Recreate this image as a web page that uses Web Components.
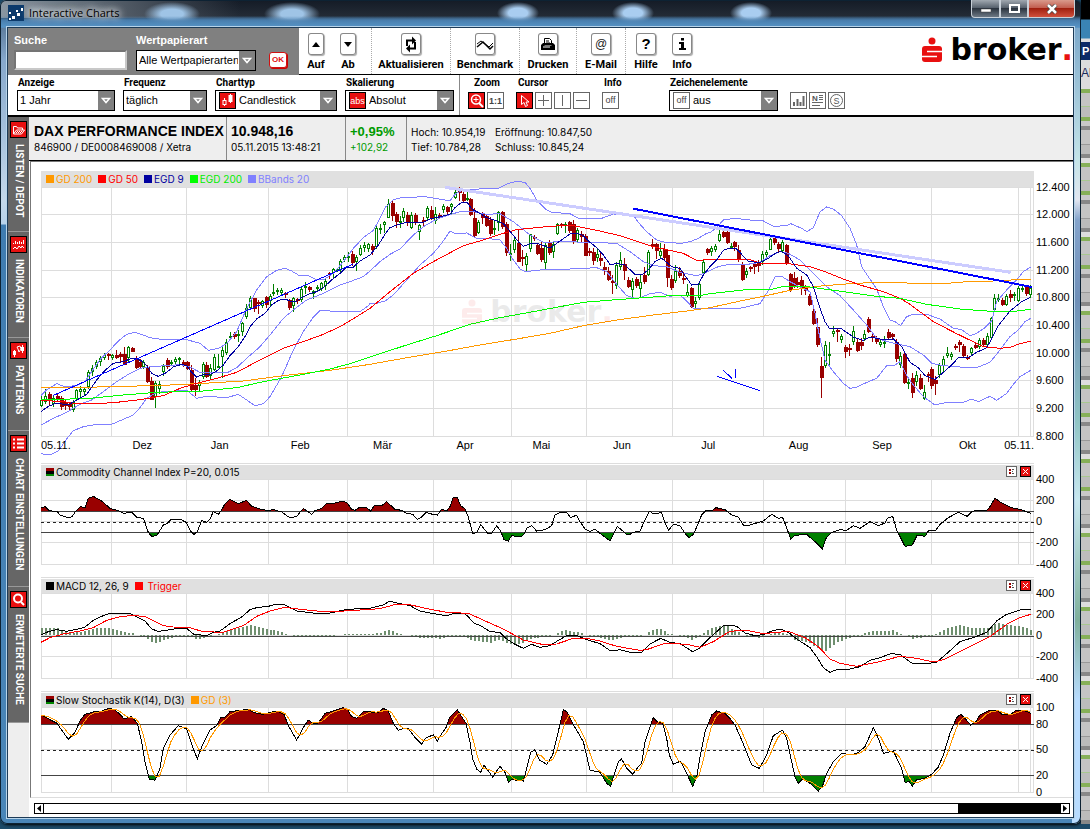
<!DOCTYPE html>
<html lang="de">
<head>
<meta charset="utf-8">
<title>Interactive Charts</title>
<style>
html{background:#1c4a68}
body{margin:0;font-family:"Liberation Sans",Arial,sans-serif;font-size:11px;line-height:12px;color:#000}
</style>
</head>
<body>
<charts-desktop>
  <charts-window heading="Interactive Charts">
    <search-bar slot="top"></search-bar>
    <main-toolbar slot="top"></main-toolbar>
    <view-toolbar slot="view"></view-toolbar>
    <side-tabs slot="side"></side-tabs>
    <quote-bar slot="main"></quote-bar>
    <chart-stack slot="main"></chart-stack>
    <range-scroller slot="main"></range-scroller>
  </charts-window>
</charts-desktop>

<script>
const component = (name, markup, css, extra) => {
  customElements.define(name, class extends HTMLElement {
    connectedCallback() {
      if (this.shadowRoot) return;
      const root = this.attachShadow({ mode: 'open' });
      const t = document.createElement('template');
      t.innerHTML = `<style>:host,*{box-sizing:border-box}${css}</style>` + (typeof markup === 'function' ? markup(this) : markup);
      root.append(t.content.cloneNode(true));
      if (extra) extra(this, root);
    }
  });
};

/* ---------- icons ---------- */
const svg = (w, h, body) => `<svg width="${w}" height="${h}" viewBox="0 0 ${w} ${h}" fill="none" aria-hidden="true" style="display:block">${body}</svg>`;
const grey = b => svg(17, 17, `<rect x=".5" y=".5" width="16" height="16" fill="#fff" stroke="#666"/>` + b);
const red = b => svg(17, 17, `<rect x=".5" y=".5" width="16" height="16" fill="#e81010" stroke="#000"/>` + b);
const smallText = (t, x, y, c, s, w) => `<text x="${x}" y="${y}" fill="${c}" font-family="Liberation Sans,Arial,sans-serif" font-size="${s}" font-weight="${w || 400}" text-anchor="middle">${t}</text>`;
const ICONS = {
  up: svg(16, 22, `<path d="M8 9l4 5H4z" fill="#000"/>`),
  down: svg(16, 22, `<path d="M8 14l4-5H4z" fill="#000"/>`),
  refresh: svg(20, 22, `<path d="M6 13V7.500h7M14 9v6.500H7" stroke="#000" stroke-width="2"/><path d="M11 3.500l4 4-4 4z" fill="#000"/><path d="M9 11.500l-4 4 4 4z" fill="#000"/>`),
  bench: svg(20, 22, `<path d="M2 14l6-5 7 7 3-3" stroke="#000" stroke-width="1.5"/><path d="M2 11l4-3 8 6 4-4" stroke="#000"/>`),
  print: svg(20, 22, `<path d="M6.5 11V5.500h5l2 2V11" fill="#fff" stroke="#000"/><path d="M8 8h3M8 10h4" stroke="#000"/><path d="M3 12l2-2h10l2 2v5H3z" fill="#000"/><path d="M5 14h7" stroke="#fff"/><path d="M6.500 12.500h7" stroke="#777"/>`),
  mail: svg(20, 22, smallText('@', 10, 15, '#222', 12)),
  help: svg(20, 22, smallText('?', 10, 16, '#000', 15, 700)),
  info: svg(20, 22, `<path d="M9 5h3v2.500H9zM7 9h5v6h2v2H7v-2h2v-4H7z" fill="#000"/>`),
  candle: red(`<path d="M5.500 6v8M11.500 2v9" stroke="#fff"/><rect x="4" y="8.500" width="3" height="4" fill="#e81010" stroke="#fff"/><rect x="9.500" y="3" width="4" height="7" fill="#fff"/>`),
  abs: red(smallText('abs', 8.5, 12, '#fff', 9)),
  zoom: red(`<circle cx="8" cy="7.500" r="4.500" stroke="#fff" stroke-width="1.500"/><path d="M11 11l4 4" stroke="#fff" stroke-width="2"/><path d="M5.500 7.500h5M8 5v5" stroke="#fff"/>`),
  one: grey(smallText('1:1', 8.5, 12, '#444', 9, 700)),
  arrow: red(`<path d="M5.500 3.500v9l2.500-2 1.500 4 2-1-1.500-3.500h3z" stroke="#fff"/>`),
  cross: grey(`<path d="M8.500 3v11M3 8.500h11" stroke="#666"/>`),
  vline: grey(`<path d="M8.500 3v11" stroke="#666"/>`),
  hline: grey(`<path d="M3 8.500h11" stroke="#666"/>`),
  off: grey(smallText('off', 8.5, 11, '#444', 9)),
  bars: grey(`<path d="M4 14v-4M7.500 14V7M10.500 14v-4M13.500 14V4" stroke="#666" stroke-width="2"/>`),
  news: grey(smallText('N', 6, 9, '#555', 8, 700) + `<path d="M10 3.500h4M10 5.500h4M10 7.500h4M3 10.500h11M3 13.500h8" stroke="#666"/>`),
  circle: grey(`<circle cx="8.500" cy="8.500" r="6" stroke="#666"/>` + smallText('S', 8.5, 12, '#555', 9)),
  folder: red(`<path d="M3.500 13V5.500h3l1 1.500h5v2M3.500 13l3-4h8l-3 4z" stroke="#fff"/><path d="M6 12l2-2M8 12l2-2M10 12l2-2" stroke="#fff"/>`),
  indi: red(`<path d="M3.500 8V7M5.500 8V5M7.500 8V6M9.500 8V5M11.500 8V6M13.500 8V4" stroke="#fff"/><path d="M3 13l2-2 2 2 2-3 2 2 1-2 2 2" stroke="#fff"/>`),
  pattern: red(`<path d="M4.500 8v7M12.500 3v8M7 5l3-1 1 3-2 3-1-3z" stroke="#fff"/><rect x="3" y="9" width="3" height="4" fill="#fff"/><rect x="11" y="5" width="3" height="4" fill="#fff"/>`),
  settings: red(`<path d="M3 4.500h2M3 8.500h2M3 12.500h2M7 4.500h7M7 8.500h7M7 12.500h7" stroke="#fff" stroke-width="2"/>`),
  search: red(`<circle cx="8" cy="7.500" r="4" stroke="#fff" stroke-width="2"/><path d="M11 11l3 3" stroke="#fff" stroke-width="2"/>`)
};

/* ---------- controls ---------- */
component('tool-button', el => `<button type="button"><i>${ICONS[el.getAttribute('icon')]}</i><span>${el.getAttribute('label')}</span></button>`, `
:host{display:block}
button{display:flex;flex-direction:column;align-items:center;gap:4px;width:100%;border:0;background:none;padding:5px 0 0;font:700 11px/12px Roboto,sans-serif;color:#000;white-space:nowrap}
i{display:flex;justify-content:center;height:22px;border-radius:3px;background:#fff;box-shadow:inset 0 0 0 1px #888,1px 1px 1px #aaa;font-style:normal}`);

component('icon-button', el => `<button type="button" aria-label="${el.getAttribute('label')}">${ICONS[el.getAttribute('icon')]}</button>`, `
:host{display:block}
button{display:block;border:0;background:none;padding:0}`);

component('pick-list', el => {
  const icon = el.getAttribute('icon');
  return `<label for="s">${el.getAttribute('label')}</label>
  <div class="box"><select id="s" class="${icon ? 'wide' : ''}"><option>${el.getAttribute('value')}</option></select>
  ${icon ? `<span class="icon">${ICONS[icon]}</span>` : ''}
  <span class="arrow">${svg(16, 19, `<path d="M4.500 7.500h7l-3.500 4z" stroke="#fff" stroke-width="1.500"/>`)}</span></div>`;
}, `
:host{display:flex;flex-direction:column;gap:1px}
label{font:700 10px/12px Roboto,sans-serif;padding-left:1px;white-space:nowrap}
:host([search]){gap:4px}
:host([search]) label{font:700 11px/12px "Liberation Sans",Arial,sans-serif;color:#fff;padding:0}
.box{display:grid;height:21px}
.box>*{grid-area:1/1}
select{appearance:none;width:100%;height:21px;border:1px solid #000;border-radius:0;background:#fff;padding:0 17px 0 2px;font:11px/19px "Liberation Sans",Arial,sans-serif;color:#000}
select.wide{padding-left:23px}
.icon{place-self:center start;padding-left:4px;pointer-events:none}
.arrow{place-self:center end;margin-right:1px;background:#808080;pointer-events:none}`);

component('search-bar', `
<div class="f"><label for="q">Suche</label><input id="q" type="text"></div>
<pick-list search label="Wertpapierart" value="Alle Wertpapierarten"></pick-list>
<button type="button">OK</button>`, `
:host{display:grid;grid-template-columns:113px 120px auto;column-gap:9px;width:291px;height:47px;background:#808080;padding:6px 0 0 6px}
.f{display:flex;flex-direction:column;gap:4px}
label{color:#fff;font-weight:700}
input{height:20px;width:100%;border:2px inset #c8c8c8;background:#fff;padding:0 2px;font:11px "Liberation Sans",Arial,sans-serif}
button{place-self:start;margin:18px 0 0 4px;width:18px;height:16px;border:1px solid #d01010;border-radius:3px;background:#fff;color:#e01010;font:700 8px/14px "Liberation Sans",Arial,sans-serif;padding:0;box-shadow:1px 1px 0 #c00}`);

component('broker-logo', `<svg width="22" height="26" viewBox="0 0 22 26" aria-hidden="true"><circle cx="10" cy="4" r="3.500" fill="#e81010"/><rect y="9" width="20" height="16" rx="3" fill="#e81010"/><path d="M5 14.500h15M0 19.500h15" stroke="#fff" stroke-width="1.500"/></svg><span>broker<b>.</b></span>`, `
:host{display:flex;align-items:flex-end;gap:6px;height:26px}
span{font:700 30px/26px "DejaVu Sans",sans-serif;white-space:nowrap;height:26px}
b{color:#e81010}`);

component('main-toolbar', `
<div class="g pair"><tool-button icon="up" label="Auf"></tool-button><tool-button icon="down" label="Ab"></tool-button></div>
<div class="g"><tool-button icon="refresh" label="Aktualisieren"></tool-button></div>
<div class="g"><tool-button icon="bench" label="Benchmark"></tool-button></div>
<div class="g"><tool-button icon="print" label="Drucken"></tool-button></div>
<div class="g"><tool-button icon="mail" label="E-Mail"></tool-button></div>
<div class="g last"><tool-button icon="help" label="Hilfe"></tool-button><tool-button icon="info" label="Info"></tool-button></div>
<broker-logo></broker-logo>`, `
:host{display:grid;grid-template-columns:73px 79px 69px 57px 49px 76px 1fr;flex:1;height:47px;background:#fff;border-bottom:1px solid #000}
.g{border-right:1px dotted #aaa}
.pair{display:grid;grid-template-columns:32px 32px;padding-left:1px}
.last{display:grid;grid-template-columns:36px 36px;padding-left:2px;border:0}
broker-logo{place-self:start end;margin:9px 0 0}`);

component('view-toolbar', `
<div class="a"><pick-list label="Anzeige" value="1 Jahr"></pick-list><pick-list label="Frequenz" value="täglich"></pick-list>
<pick-list label="Charttyp" value="Candlestick" icon="candle"></pick-list><pick-list label="Skalierung" value="Absolut" icon="abs"></pick-list></div>
<div class="b">
<div class="f mid"><span>Zoom</span><div><icon-button icon="zoom" label="Vergrößern"></icon-button><icon-button icon="one" label="Originalgröße"></icon-button></div></div>
<div class="f"><span>Cursor</span><div><icon-button icon="arrow" label="Pfeil"></icon-button><icon-button icon="cross" label="Fadenkreuz"></icon-button><icon-button icon="vline" label="Vertikal"></icon-button><icon-button icon="hline" label="Horizontal"></icon-button></div></div>
<div class="f"><span>Info</span><div><icon-button icon="off" label="Info aus"></icon-button></div></div>
<pick-list label="Zeichenelemente" value="aus" icon="off"></pick-list>
<div class="f"><span></span><div><icon-button icon="bars" label="Volumen"></icon-button><icon-button icon="news" label="News"></icon-button><icon-button icon="circle" label="Splits"></icon-button></div></div>
</div>`, `
:host{display:flex;height:42px;background:#fff;border-bottom:2px solid #000;padding-left:9px}
.a{display:grid;grid-template-columns:98px 84px 122px 109px;gap:8px;padding:2px 5px 0 0;border-right:1px solid #888}
.b{display:grid;grid-template-columns:36px 74px 55px 109px auto;column-gap:12px;padding:2px 0 0 8px}
.f{display:grid;grid-template-rows:12px 21px;gap:1px;align-items:center}
.f>div{display:flex;gap:2px}
.mid{text-align:center}
.f span{font:700 10px/12px Roboto,sans-serif;padding-left:2px}`);

component('side-tab', el => `<button type="button"><span>${ICONS[el.getAttribute('icon')]}</span><b>${el.textContent}</b></button>`, `
:host{display:block;background:#666;border-bottom:1px solid #999}
button{display:flex;flex-direction:column;align-items:center;gap:6px;width:100%;border:0;background:none;padding:4px 0 12px;color:#fff}
b{writing-mode:vertical-rl;font:700 10px/12px Roboto,sans-serif;white-space:nowrap}`);

component('side-tabs', `
<side-tab icon="folder">LISTEN / DEPOT</side-tab><side-tab icon="indi">INDIKATOREN</side-tab><side-tab icon="pattern">PATTERNS</side-tab><side-tab icon="settings">CHART EINSTELLUNGEN</side-tab><side-tab icon="search">ERWETERTE SUCHE</side-tab>`, `
:host{display:grid;grid-template-rows:115px 106px 93px 156px 136px;align-content:start;width:21px;background:#eee}`);

component('quote-bar', `
<div class="n"><strong>DAX PERFORMANCE INDEX</strong><span>846900 / DE0008469008 / Xetra</span></div>
<div><strong>10.948,16</strong><span>05.11.2015 13:48:21</span></div>
<div class="up"><b>+0,95%</b><span>+102,92</span></div>
<dl><dt>Hoch: 10.954,19</dt><dd>Eröffnung: 10.847,50</dd><dt>Tief: 10.784,28</dt><dd>Schluss: 10.845,24</dd></dl>`, `
:host{display:grid;grid-template-columns:198px 119px 61px 1fr;height:44px;background:#eee;border-bottom:1px solid #000;font:10px/14px Inter,sans-serif}
:host>div{display:flex;flex-direction:column}
div{display:flex;flex-direction:column;padding:6px 0 0 4px;border-right:1px solid #888;white-space:nowrap}
.n{padding-left:5px}
strong{font:700 14px/17px "Liberation Sans",Arial,sans-serif}
b{font:700 13px/17px "Liberation Sans",Arial,sans-serif}
.up{color:#009a00}
dl{display:grid;grid-template-columns:84px auto;grid-auto-rows:15px;justify-content:start;margin:0;padding:8px 0 0 4px}
dt,dd{margin:0;white-space:nowrap}`);

/* ---------- chart data: three chart units per screen pixel ---------- */
const STEP = 11.82;
const join = parts => parts.flatMap(([dx, s]) => s.trim().split(/\s+/).map(p => { const [x, y] = p.split(',').map(Number); return [x + dx, y]; })).sort((a, b) => a[0] - b[0]);
const price = (a, b, c) => join([[-33, a], [987, b], [2007, c]]);
const indic = (a, b, c) => join([[-33, a], [1077, b], [2067, c]]);

const CANDLES = `u690,705,722,725 u672,694,712,718 d682,688,710,722 u690,698,716,726 d686,692,702,712 d692,698,726,734 d705,712,724,736 d712,716,724,734 u704,712,736,740 u672,676,702,706
u662,672,680,700 u668,672,680,690 u614,620,666,672 u600,610,622,632 u586,592,606,612 u572,580,592,602 u564,570,578,586 d564,567,569,584 u566,570,580,586 d556,570,578,582
d560,566,574,590 d546,566,598,600 u542,545,577,590 d546,549,560,562 d574,582,608,612 d582,592,606,610 u584,592,606,612 d600,606,650,654 d636,648,704,706 u648,654,696,728
u648,656,672,686 u598,604,622,632 d580,584,606,612 u584,592,598,604 u576,582,590,600 u576,580,584,600 d584,590,600,606 d588,590,612,616 d600,614,674,678 d640,660,674,694
u646,654,664,678 u590,598,636,642 d590,600,636,640 u596,608,632,642 u568,576,614,618 u568,602,606,610 u546,556,578,640 u522,530,564,570 u502,512,516,526 d502,506,514,522
u496,506,512,532 u470,474,500,514 u416,430,458,462 u394,398,428,436 d398,400,434,440 d406,412,418,448 u404,408,422,430 d394,397,420,430 u386,392,408,426 u358,380,386,394
u370,375,382,390 u368,376,384,390 d382,385,389,400 d402,405,430,436 u396,400,424,440 d398,402,408,418 u362,372,406,412 u352,362,366,388 d362,366,374,380 u374,378,388,402
u360,366,372,380 u350,354,372,378 u340,347,362,374 d320,324,330,342 u308,313,326,338 u308,313,316,322 u282,288,314,320 u270,276,286,292 u262,272,276,290 d258,268,296,302
u270,276,292,318 u240,248,268,274 u232,240,250,262 u234,236,252,260 d236,242,254,270 u184,190,248,252 u176,188,192,208 u168,172,180,204 u102,116,158,160 d108,114,152,168
d140,148,172,188 u152,168,172,190 u128,138,160,172 d142,150,172,182 u142,150,188,192 d144,150,172,180 u176,180,200,226 d156,166,172,182 u122,130,160,164 d124,134,160,164
u126,148,170,176 d144,150,154,160 u116,124,136,144 d122,126,142,148 u114,116,126,150 u74,80,98,102 d66,78,84,108 d78,86,108,112 u82,98,104,108 d100,102,150,152
d130,160,214,218 u166,172,204,208 d140,148,160,178 d146,152,182,186 d156,166,208,214 u166,188,192,210 u138,142,176,198 d138,142,188,192 d170,178,266,272 u238,264,268,288
u220,226,256,264 d196,234,290,292 d254,276,282,304 u264,272,300,322 u206,208,254,260 d210,216,222,228 d238,240,266,270 d232,248,284,290 u230,240,294,312 d226,232,264,270
u230,236,260,280 u174,178,208,210 d174,178,184,190 u172,178,184,204 d168,172,200,204 d164,178,230,236 u190,196,226,232 d198,206,216,230 d206,212,272,274 d250,258,264,274
d248,262,290,300 u248,268,280,290 d262,278,286,302 d292,306,316,330 d306,318,344,348 d330,348,352,386 u290,300,362,372 u262,286,308,314 d280,296,318,346 d336,346,366,370
u340,348,376,398 d336,342,364,368 u330,352,372,400 d306,330,352,358 u256,260,328,332 d222,238,248,252 d234,238,260,282 u234,258,272,280 d236,252,278,284 d252,270,338,366
d330,342,368,376 u300,318,348,354 d306,318,334,340 d322,338,344,358 u356,380,392,396 d366,368,426,430 u396,408,416,430 u348,358,400,404 u286,292,324,328 d248,252,264,270
u244,250,262,272 u236,244,256,262 u194,206,228,232 d198,202,216,220 d196,200,232,236 u234,242,246,250 d228,230,246,258 d240,254,284,292 d292,296,344,348 u308,318,330,340
d302,306,312,320 d294,296,306,326 d286,294,302,320 u258,266,290,300 u254,262,270,276 u214,222,254,256 d216,220,236,240 d232,238,254,262 u226,232,260,262 d236,240,296,300
d324,328,376,380 d322,338,366,370 d336,350,360,368 d332,344,368,390 d360,362,376,390 d386,394,420,424 d424,438,476,480 d458,486,540,546 d576,602,638,700 u528,540,602,610
u530,566,572,600 u484,498,508,516 d490,494,500,530 u508,512,524,534 d540,546,560,578 d538,550,556,572 u482,498,530,540 d520,530,556,562 d520,532,544,556 u496,506,520,528
d456,462,502,504 d500,512,518,530 d514,520,532,536 u524,532,542,546 u514,530,534,548 d492,502,520,524 d504,508,518,522 d522,530,580,592 u560,572,598,608 d564,568,654,656
u640,650,656,672 d624,640,684,698 u618,630,650,662 d626,638,670,674 u660,680,702,704 d620,628,632,650 d606,612,664,672 d634,646,658,690 u594,600,630,640 u572,582,602,620
u546,564,572,578 u560,566,574,584 d536,542,548,556 d526,532,542,560 d538,542,572,578 d570,576,580,586 u546,550,566,572 d532,540,548,552 u520,526,548,552 d520,526,540,546
u504,514,540,544 u456,460,520,526 u388,400,436,440 u386,398,402,412 d398,406,422,424 u386,394,420,424 d376,386,398,410 u382,388,392,408 u364,370,410,412 u362,370,374,382
d362,366,388,394 u360,368,390,400`.trim().split(/\s+/).map(c => [c[0], ...c.slice(1).split(',').map(Number)]);

const PRICE_LINES = [
 ['#8080ff', price('33,692 50,675 80,656 105,665 120,664 145,660 165,650 190,612 215,578 240,555 265,528 290,508 315,502 340,510 360,518 400,524 470,524 510,535 535,556 565,550 590,536 620,500 650,430 680,375 710,335 740,316 765,310 785,318 805,330 830,330 860,344 880,345 910,325 940,290 970,250 1000,218',
  '10,196 20,178 45,128 70,104 95,98 165,95 220,104 240,108 255,88 275,76 300,73 385,70 415,55 440,49 465,52 480,70 500,105 530,135 545,142 600,146 625,160 695,160 730,147 790,150 805,172 830,200 860,225 885,232 935,235 960,230 985,220 1010,205',
  '0,203 20,188 40,165 75,160 120,165 155,165 190,184 230,182 242,176 275,190 290,200 310,188 330,140 350,126 370,132 395,152 420,190 440,240 455,305 475,335 500,372 520,425 540,465 555,470 572,482 590,455 610,448 650,448 690,462 730,490 755,494 780,512 800,505 825,488 845,468 860,410 890,375 920,345 940,320 962,306')],
 ['#8080ff', price('33,780 70,760 110,742 155,715 185,705 220,680 260,650 300,625 330,610 370,604 420,602 450,598 480,606 510,622 560,622 590,624 620,608 650,580 690,545 720,510 760,460 790,435 830,405 880,385 930,360 965,348 1000,335',
  '0,318 30,290 60,268 90,252 130,210 160,185 190,168 220,155 270,140 310,140 350,148 390,146 430,170 480,210 520,232 580,230 660,232 740,235 780,260 820,290 850,302 890,305 930,322 980,332 1010,322',
  '0,316 25,305 60,297 100,300 150,292 180,272 210,260 235,265 270,285 310,325 350,365 390,392 430,435 470,480 500,520 540,532 600,545 640,570 665,595 700,602 750,606 800,608 840,592 870,555 900,515 925,495 945,470 962,460')],
 ['#8080ff', price('33,866 60,870 85,858 110,822 130,797 160,785 200,778 240,780 280,763 310,750 330,728 350,700 380,682 470,676 500,700 530,694 590,698 625,688 650,705 675,722 700,716 720,695 755,635 790,555 820,500 850,456 870,436 900,438 950,440 990,440 1015,422',
  '0,415 20,415 45,408 70,390 110,345 150,300 190,265 215,235 240,198 255,205 290,204 320,220 350,220 390,225 410,250 430,285 450,312 465,320 510,315 600,312 680,308 710,320 740,358 770,392 800,402 840,386 870,382 900,394 930,390 950,408 970,430',
  '0,430 90,430 150,416 170,385 195,335 215,334 240,350 270,366 300,380 315,445 330,520 345,585 370,620 400,655 420,670 440,666 480,648 500,640 530,602 555,600 570,590 590,632 610,660 640,695 675,720 710,712 760,712 785,702 805,710 840,694 860,706 890,685 910,658 930,635 962,616')],
 ['#ff9900', price('33,667 200,666 400,661 520,655 640,648 760,632 900,616', '0,598 100,580 220,560 330,540 440,522 540,505 640,482 740,465 850,450 950,438', '0,428 100,406 150,396 240,376 320,364 420,356 500,352 590,354 700,356 770,350 850,348 920,344 962,344')],
 ['#ff0000', price('33,706 100,710 140,716 190,717 260,712 330,704 400,692 450,670 500,655 560,640 620,622 680,590 760,550 820,530 880,508 930,485 980,455', '0,430 60,380 130,325 190,290 280,242 330,228 400,205 440,194 520,186 570,182 610,182 680,196 750,212 850,245 940,265 980,286', '0,284 120,284 150,294 235,296 300,305 350,322 400,342 450,360 520,380 570,400 600,418 670,470 740,506 820,545 870,550 900,547 930,536 962,528')],
 ['#00ff00', price('33,702 120,702 180,700 280,690 380,682 520,678 620,668 700,650 820,628 900,612 960,596', '0,576 110,540 200,512 300,478 390,458 500,438 640,412 740,404 850,396 900,392 990,392', '0,386 100,375 190,372 220,364 300,366 400,380 500,394 570,400 650,418 750,432 830,438 920,438 962,433')],
 ['#0000a0', price('33,740 55,724 80,714 100,718 120,717 140,705 170,688 200,645 225,616 250,595 280,590 300,582 320,581 335,588 350,602 365,625 385,634 405,625 430,606 455,598 470,602 485,622 500,636 515,630 540,628 560,618 580,600 600,572 625,545 645,515 660,485 680,462 705,445 725,420 745,406 765,402 780,408 800,408 820,395 840,386 860,380 880,368 905,345 930,325 950,306 970,306 990,288',
  '0,270 25,240 45,208 60,188 80,180 110,172 155,174 180,162 240,148 255,128 275,112 292,112 305,132 330,145 350,158 380,168 400,176 425,205 445,230 460,244 480,236 500,235 515,240 540,249 570,228 600,207 625,206 640,212 660,232 680,248 700,270 720,298 745,296 765,300 795,328 815,330 835,315 855,290 875,280 890,292 905,305 930,310 945,332 965,360 985,358 1000,330',
  '0,305 20,285 40,256 55,250 78,250 95,268 115,290 150,292 175,280 200,262 215,260 235,272 260,310 290,330 310,365 330,430 345,470 358,490 395,492 430,516 460,526 480,516 520,524 550,522 575,545 600,592 625,608 645,632 675,643 700,622 725,600 745,578 775,578 800,562 830,548 845,522 865,482 900,438 935,410 960,398')]
];
const CCI = indic('33,158 45,155 55,165 65,168 80,168 90,180 110,187 125,186 138,168 152,155 165,158 175,130 190,124 215,138 240,160 265,167 280,175 305,172 320,187 340,190 355,232 365,244 380,242 400,210 410,206 425,192 450,192 468,202 480,226 492,238 502,230 515,196 530,202 540,192 550,170 565,178 575,165 585,146 600,133 625,146 650,136 665,154 690,162 715,167 730,163 745,168 755,170 770,182 782,188 800,184 820,160 845,178 855,167 875,160 890,146 915,144 940,138 952,145 965,163 975,166 990,156 1010,158 1022,168 1033,152 1055,152 1070,140 1095,163',
 '5,166 20,175 38,178 52,193 65,186 78,172 98,178 112,180 125,163 140,168 150,155 160,126 172,128 182,152 195,162 205,186 218,236 230,232 242,208 262,234 275,235 290,212 302,228 312,254 325,258 335,242 360,246 370,240 380,220 395,212 410,228 435,224 455,212 465,180 480,172 500,172 512,188 530,180 540,200 555,222 570,230 585,222 600,235 630,258 652,214 680,238 690,238 700,232 720,228 735,195 748,168 760,176 785,173 795,205 806,226 820,208 840,212 855,235 868,248 880,238 892,212 905,180 918,166 935,168 948,158 975,164',
 '5,180 25,186 40,210 60,210 100,198 125,178 145,190 158,188 170,218 182,252 195,241 230,238 255,260 277,282 288,250 305,232 330,224 350,226 370,212 390,220 420,200 445,212 465,204 472,190 488,184 500,225 525,274 547,270 562,240 585,244 597,225 617,226 630,208 655,188 685,172 712,184 725,170 745,165 768,168 780,155 795,130 812,142 845,158 870,163 902,175');
const MACD = indic('33,540 55,530 80,524 110,529 145,522 165,516 190,496 215,484 240,475 300,475 325,488 345,498 365,522 385,529 420,524 450,519 470,520 490,537 530,542 550,532 570,528 600,506 635,486 660,464 680,458 715,454 740,447 760,448 800,468 850,474 900,474 950,463 1020,460 1060,450 1080,438 1100,444',
 '0,446 30,452 60,468 100,476 140,482 165,474 190,474 205,485 220,503 245,514 270,530 300,532 320,552 345,568 370,580 395,568 420,577 450,572 475,556 500,542 530,541 560,554 600,566 632,588 660,584 690,592 725,592 750,567 782,550 810,562 840,566 878,590 895,582 930,548 970,512',
 '0,510 20,514 45,534 75,542 100,539 130,526 155,523 175,532 200,552 240,578 260,605 280,638 300,652 320,644 340,642 360,642 390,635 420,616 450,608 485,595 512,600 545,624 580,627 620,622 650,596 690,560 735,546 770,532 800,498 830,478 875,463 902,463');
const TRIGGER = indic('33,562 60,548 100,537 150,528 190,518 230,496 270,485 310,481 345,485 400,512 430,516 475,517 520,530 580,532 640,512 680,484 720,468 765,457 820,464 890,471 960,467 1050,461 1090,450',
 '0,448 30,449 75,460 140,472 205,475 260,500 310,522 370,555 430,569 470,567 520,550 560,550 600,558 650,574 720,586 740,584 795,565 860,568 900,577 940,560 985,532',
 '0,530 30,525 60,528 100,536 175,529 225,548 265,575 300,612 330,625 380,634 440,622 510,604 560,610 610,621 640,614 700,584 780,545 830,508 870,488 902,478');
const HISTO = indic('33,520 80,520 100,528 120,536 150,530 190,520 240,520 265,526 290,534 305,534 320,541 345,548 365,563 385,563 400,556 420,550 440,543 470,543 480,546 497,554 520,548 535,543 560,540 580,530 620,520 655,510 690,518 730,526 760,533 775,541 800,543 890,543 915,541 940,538 1020,538 1055,532 1070,525 1090,530 1105,538',
 '5,538 20,541 40,545 60,550 90,547 115,551 150,543 190,543 215,556 240,560 275,563 290,555 310,560 330,567 360,567 380,552 420,547 455,541 465,536 480,530 495,525 520,531 540,533 555,541 600,549 630,557 660,548 700,544 730,541 745,530 760,522 785,522 800,536 830,541 860,548 875,555 890,546 900,541 915,528 935,518 960,513 980,514',
 '0,520 25,530 45,546 90,548 120,536 155,534 175,541 190,555 230,560 255,575 277,592 300,578 320,562 345,553 375,545 395,541 410,530 485,526 510,536 545,551 585,546 610,541 640,524 685,510 720,518 770,518 800,503 830,510 880,516 902,526');
const STOCH = indic('33,781 50,788 65,797 80,804 100,832 115,853 135,832 150,798 165,778 190,771 215,768 238,760 255,765 270,778 282,792 305,785 322,805 335,860 345,920 358,972 375,976 390,940 400,880 420,840 445,812 470,822 485,868 502,912 515,876 540,825 560,812 572,788 585,787 600,770 630,766 658,763 672,773 700,778 720,772 742,768 762,778 775,812 800,855 820,818 835,795 850,805 865,804 885,775 910,768 940,758 952,762 965,785 980,790 1000,770 1045,772 1060,760 1075,768 1090,805 1105,826',
 '5,822 25,820 45,848 65,868 78,848 100,840 112,858 125,836 138,818 150,785 172,765 185,785 198,805 210,862 218,912 230,942 242,952 252,930 278,966 300,934 315,952 325,982 335,974 370,978 380,940 392,892 405,884 418,915 440,928 458,900 470,850 482,800 490,764 500,770 515,800 550,860 570,945 600,952 620,985 632,994 645,950 655,920 665,912 680,940 698,958 715,935 725,925 735,860 750,815 760,788 772,800 788,805 800,850 808,900 820,928 842,918 860,955 878,994 890,965 900,905 915,830 935,780 950,768 975,775',
 '0,790 15,810 35,855 65,930 88,940 110,900 130,842 158,825 170,850 185,920 195,965 205,985 218,972 240,985 265,1008 277,995 290,955 310,920 335,895 365,900 385,892 405,875 430,818 445,850 460,895 490,888 515,940 525,982 537,980 547,993 560,974 585,970 605,958 625,936 640,900 660,835 680,788 692,778 705,790 722,810 738,800 750,780 775,767 805,768 817,780 842,778 855,768 880,765 902,775');

const at = (pts, x) => {
  let k = pts.findIndex(p => p[0] >= x);
  if (k < 0) return pts[pts.length - 1][1];
  if (k === 0) return pts[0][1];
  const [a, b] = [pts[k - 1], pts[k]];
  return a[1] + (b[1] - a[1]) * (x - a[0]) / (b[0] - a[0] || 1);
};
const average = pts => CANDLES.map((_, i) => { const x = i * STEP; return [x, (at(pts, x) + at(pts, x - STEP) + at(pts, x - 2 * STEP)) / 3]; });
const line = (pts, color, w = 3) => `<polyline points="${pts.map(p => p.join()).join(' ')}" fill="none" stroke="${color}" stroke-width="${w}"/>`;
const hline = (y, c, dash) => `<path d="M0 ${y + 1.5}H2979" stroke="${c}" stroke-width="3" ${dash ? 'stroke-dasharray="9 9"' : ''}/>`;
const MONTHS = [0, 210, 435, 681, 918, 1176, 1410, 1635, 1893, 2166, 2412, 2670, 2931, 2967, 2976];
const grid = (top, h, ys) => MONTHS.map(x => `<path d="M${x + 1.5} ${top}v${h}" stroke="#ddd" stroke-width="3"/>`).join('') + ys.map(y => hline(y, '#ddd')).join('');
const plot = (top, h, body) => `<svg class="plot" height="${h / 3}" viewBox="0 ${top} 2979 ${h}" preserveAspectRatio="none" shape-rendering="crispEdges" aria-hidden="true">${body}</svg>`;
const axis = (h, labels) => `<svg class="axis" width="39" height="${h}">${labels.map(([y, t]) => `<text x="2" y="${y + 4}">${t}</text>`).join('')}</svg>`;
const zones = (pts, hi, lo, id) => {
  const s = pts.map(p => p.join()).join(' ');
  return `<clipPath id="${id}a"><rect x="0" y="0" width="2979" height="${hi}"/></clipPath><clipPath id="${id}b"><rect x="0" y="${lo}" width="2979" height="400"/></clipPath>
  <polygon points="0,${hi} ${s} 2969,${hi}" fill="#990000" clip-path="url(#${id}a)"/><polygon points="0,${lo} ${s} 2969,${lo}" fill="#008000" clip-path="url(#${id}b)"/>`;
};
const legend = items => items.map(([sw, t, c]) => `<span class="item" style="color:${c}"><i style="background:${sw}"></i>${t}</span>`).join('');
const PLOT_CSS = `
:host{display:grid;grid-template-columns:1fr 39px}
.head{display:flex;align-items:center;gap:6px;background:#e0e0e0;padding-left:5px;font:10px/14px Inter,sans-serif;white-space:nowrap}
.item{display:flex;align-items:center;gap:2px}
.item i{width:8px;height:8px}
.plot{display:block;width:100%;overflow:visible;grid-column:1}
.axis{display:block;overflow:visible;grid-column:2}
text{font:11px "Liberation Sans",Arial,sans-serif}`;

component('price-chart', () => {
  const candles = CANDLES.map(([d, h, t, b, l], i) => {
    const x = Math.round(i * STEP / 3) * 3 + 1.5, c = d === 'u' ? '#008000' : '#990000';
    const hh = Math.max(6, Math.round((b - t) / 3) * 3), y = Math.round((t - 66) / 3) * 3 + 66;
    return `<path d="M${x} ${h}V${l}" stroke="${c}" stroke-width="3"/>` + (d === 'u'
      ? `<rect x="${x - 3}" y="${y + 1.5}" width="6" height="${Math.max(3, hh - 3)}" fill="#fff" stroke="${c}" stroke-width="3"/>`
      : `<rect x="${x - 4.5}" y="${y}" width="12" height="${hh}" fill="${c}"/>`);
  }).join('');
  const ys = [66, 147, 231, 315, 396, 480, 564, 645, 729, 813];
  const names = ['12.400', '12.000', '11.600', '11.200', '10.800', '10.400', '10.000', '9.600', '9.200', '8.800'];
  const months = [['Dez', 101], ['Jan', 179], ['Feb', 259], ['Mär', 342], ['Apr', 424], ['Mai', 500], ['Jun', 581], ['Jul', 667], ['Aug', 758], ['Sep', 841], ['Okt', 926]];
  return `<div class="head">${legend([['#ff9900', 'GD 200', '#ff9900'], ['#ff0000', 'GD 50', '#ff0000'], ['#0000a0', 'EGD 9', '#0000a0'], ['#00ff00', 'EGD 200', '#00ee00'], ['#8080ff', 'BBands 20', '#8080ff']])}</div>
  <div class="stage">${plot(66, 750, grid(66, 750, ys))}<broker-logo></broker-logo>${plot(66, 750,
    candles + PRICE_LINES.map(([c, p]) => line(p, c)).join('') +
    `<path d="M1212 67L2909 322" stroke="#ccccff" stroke-width="9"/><path d="M1777 131L2972 366" stroke="#0000ff" stroke-width="6"/>
    <path d="M35 692L937 297M2027 634L2157 677M2047 616L2073 640M2084 612V640" stroke="#0000ff" stroke-width="3"/>`)}</div>
  ${axis(250, ys.map((y, i) => [(y - 66) / 3, names[i]]))}
  <svg class="dates" height="26"><text x="0" y="12">05.11.</text>${months.map(([t, x]) => `<text x="${(x / 9.93).toFixed(1)}%" y="12" text-anchor="middle">${t}</text>`).join('')}<text x="100%" y="12" text-anchor="end">05.11.</text></svg>`;
}, PLOT_CSS + `
.head{height:16px}
.stage{display:grid;grid-column:1}
.stage>*{grid-area:1/1}
.stage broker-logo{place-self:center;opacity:.08}
.dates{display:block;grid-column:1;width:100%;overflow:visible}`);

component('indicator-chart', el => {
  const tri = 'linear-gradient(#900 3px,#000 3px 6px,#080 6px)';
  const even = [[0, '400'], [21, '200'], [42, '0'], [63, '-200'], [85, '-400']];
  const kinds = {
    cci: () => [[[tri, 'Commodity Channel Index P=20, 0.015', '#000']],
      grid(72, 258, [72, 135, 198, 261, 327]) + zones(CCI, 170, 232, 'c') + hline(168, '#444') + hline(201, '#222', true) + hline(231, '#444') + line(CCI, '#000'), 72, even],
    macd: () => [[['#000', 'MACD 12, 26, 9', '#000'], ['#ff0000', '&nbsp;Trigger', '#ff0000']],
      grid(414, 258, [414, 477, 540, 603, 669]) + CANDLES.map((_, i) => {
        const y = Math.round(at(HISTO, i * STEP) / 3) * 3, z = 540;
        return Math.abs(y - z) < 2 ? '' : `<rect x="${Math.round(i * STEP / 3) * 3}" y="${Math.min(y, z)}" width="6" height="${Math.abs(y - z)}" fill="#6f8f6f"/>`;
      }).join('') + hline(543, '#444') + line(MACD, '#000') + line(TRIGGER, '#ff0000'), 414, even],
    stoch: () => [[[tri, 'Slow Stochastik K(14), D(3)', '#000'], ['#ff9900', 'GD (3)', '#ff9900']],
      grid(756, 258, [756, 882, 1011]) + zones(STOCH, 808, 962, 's') + hline(807, '#444') + hline(885, '#222', true) + hline(960, '#444') + line(STOCH, '#000') + line(average(STOCH), '#ff9900'), 756,
      [[0, '100'], [17, '80'], [42, '50'], [68, '20'], [85, '0']]]
  };
  const [items, body, top, labels] = kinds[el.getAttribute('kind')]();
  return `<div class="head">${legend(items)}<span class="tools">
    <button type="button" aria-label="Einstellungen">${svg(11, 11, '<rect x=".5" y=".5" width="10" height="10" fill="#fff" stroke="#666"/><path d="M3 3h2v2H3zM3 6h2v2H3z" fill="#900"/><path d="M6 3.500h2M6 5.500h1M6 7.500h2" stroke="#555"/>')}</button>
    <button type="button" aria-label="Schließen">${svg(11, 11, '<rect x=".5" y=".5" width="10" height="10" fill="#e81010" stroke="#000"/><path d="M3 3l5 5M8 3l-5 5" stroke="#fff"/>')}</button></span></div>
  ${plot(top, 258, body)}${axis(86, labels)}`;
}, PLOT_CSS + `
.head{height:16px;border-top:1px solid #ddd;box-shadow:inset 0 1px 0 #fff}
.tools{display:flex;gap:3px;margin-left:auto;padding-right:3px}
button{display:block;border:0;padding:0;background:none}`);

component('chart-stack', `<price-chart></price-chart><indicator-chart kind="cci"></indicator-chart><indicator-chart kind="macd"></indicator-chart><indicator-chart kind="stoch"></indicator-chart>`, `
:host{display:flex;flex-direction:column;background:#fff;border:solid #777;border-width:1px 0 0 1px;margin-left:1px;padding:9px 0 4px 10px;border-bottom:1px solid #ddd}
indicator-chart+indicator-chart{margin-top:12px}`);

component('range-scroller', `<div class="bar"><button type="button" aria-label="Zurück">${svg(8, 9, '<path d="M6 1v7L2 4.500z" fill="#000"/>')}</button><div class="track"><div class="thumb"></div></div><button type="button" aria-label="Vor">${svg(8, 9, '<path d="M2 1v7l4-3.500z" fill="#000"/>')}</button></div>`, `
:host{display:block;background:#fff;margin-left:1px;padding:5px 3px 3px 4px}
.bar{display:flex;height:11px;border:1px solid #000}
button{border:0;padding:0;background:#fff}
.track{flex:1;display:flex;justify-content:flex-end;border:solid #000;border-width:0 1px}
.thumb{width:10%;background:#000}`);

/* ---------- window frame and desktop ---------- */
component('charts-window', el => `
<header><span class="logo">${svg(16, 16, '<rect width="16" height="16" fill="#0c3a6b"/><path d="M1 7h2v2H1zM4 11h3v3H4zM1 13h2v2H1zM9 8h3v3H9zM8 5h2v2H8zM13 3h2v3h-2z" fill="#fff"/>')}</span><span class="title">${el.getAttribute('heading')}</span>
<span class="ctl"><button type="button" aria-label="Minimieren">${svg(12, 10, '<rect x="1" y="5" width="10" height="3" fill="#fff" stroke="#444" stroke-width=".5"/>')}</button><button type="button" aria-label="Maximieren">${svg(12, 10, '<rect x="2" y="1" width="9" height="7" fill="none" stroke="#fff" stroke-width="2"/>')}</button><button type="button" class="x" aria-label="Schließen">${svg(12, 10, '<path d="M2 1l8 8M10 1l-8 8" stroke="#444" stroke-width="4"/><path d="M2 1l8 8M10 1l-8 8" stroke="#fff" stroke-width="2.500"/>')}</button></span></header>
<div class="content"><div class="top"><slot name="top"></slot></div><slot name="view"></slot>
<div class="work"><slot name="side"></slot><main><slot name="main"></slot></main></div></div>`, `
:host{display:block;padding:0 8px 7px;border-radius:6px 6px 7px 7px;box-shadow:inset 0 0 0 1px #0d2233,1px 1px 3px #000;
background:linear-gradient(transparent 16px,#4a80b0cc 21px,#5592c4 27px,transparent 28px) 0 0/100% 28px no-repeat,
radial-gradient(28px 12px at 172px 14px,#9fc4e6 0 40%,transparent),radial-gradient(28px 12px at 292px 14px,#9fc4e6 0 40%,transparent),radial-gradient(21px 11px at 518px 13px,#a9cdf0 0 45%,transparent),radial-gradient(21px 11px at 633px 13px,#a9cdf0 0 45%,transparent),radial-gradient(21px 11px at 751px 13px,#a9cdf0 0 45%,transparent),
linear-gradient(90deg,#8a97a2,#5b6570 100px,transparent 240px) 0 0/100% 18px no-repeat,
linear-gradient(#141b26,#232b36 16px,#4a80b0 21px,#5592c4 27px,transparent 28px) 0 0/100% 28px no-repeat,
linear-gradient(#6e9cc4,#c4e4e8 160px,#e2e6f0 200px,#84a4cc 220px,#6f8fb8 300px,#8fc4c4 420px,#c8e8f0 500px,#7fb09c 620px,#b8dcff 700px,#b8dcff) 100% 0/9px 100% no-repeat,
linear-gradient(#3c5a78,#86a8cc 60px,#c4d8ea 200px,#b8d2ea 224px,#3f7cb0 225px,#4a86b8)}
header{display:flex;align-items:center;height:28px;gap:5px}
.logo{padding-bottom:2px}
.title{flex:1;font:11px/24px "Open Sans",sans-serif;padding-bottom:2px;text-shadow:0 0 6px #fff,0 0 8px #dfe8f0,0 0 10px #fff}
.ctl{display:flex;align-self:flex-start;margin-right:-2px}
.ctl button{width:28px;height:18px;border:1px solid #c8d0d8;border-top:0;background:linear-gradient(#a0a8b0,#505a66 50%,#2c3540 50%,#6c7884);padding:0;display:grid;place-items:center}
.ctl button:first-child{border-radius:0 0 0 4px;width:29px}
.ctl button.x{width:47px;border-radius:0 0 4px 0;background:linear-gradient(#d99a8c,#c0584a 50%,#a02010 50%,#d0503c)}
.content{background:#eee;box-shadow:0 0 0 1px #1d3b57,0 0 0 2px #b7d4ea}
.top{display:flex}
.work{display:flex;background:#eee}
main{flex:1;min-width:0;background:#fff}`);

component('charts-desktop', `<slot></slot><aside><b>P</b><span>Ak</span><i></i></aside>`, `
:host{display:grid;grid-template-columns:1fr 9px;padding-bottom:5px;background:#1c4a68}
aside{display:flex;flex-direction:column;overflow:hidden;background:linear-gradient(#000 19px,#3a84b4 20px 38px,#ddd 39px 42px,#0c2a68 42px 60px,#dcdcdc 60px)}
b{color:#fff;font-size:11px;padding:45px 0 0 1px}
span{color:#1a2a5a;font-size:12px;padding-top:10px}
i{flex:1;margin-top:10px;background:repeating-linear-gradient(#86b058 0 4px,#c4c4c4 4px 17px,#a8c890 17px 18px,#bcbcbc 18px 28px,#86b058 28px 32px,#c8c8c8 32px 37px,#888 37px 41px,#c4c4c4 41px 55px,#999 55px 56px,#bbb 56px 65px,#888 65px 69px,#ddd 69px 74px)}`);
</script>
</body>
</html>
